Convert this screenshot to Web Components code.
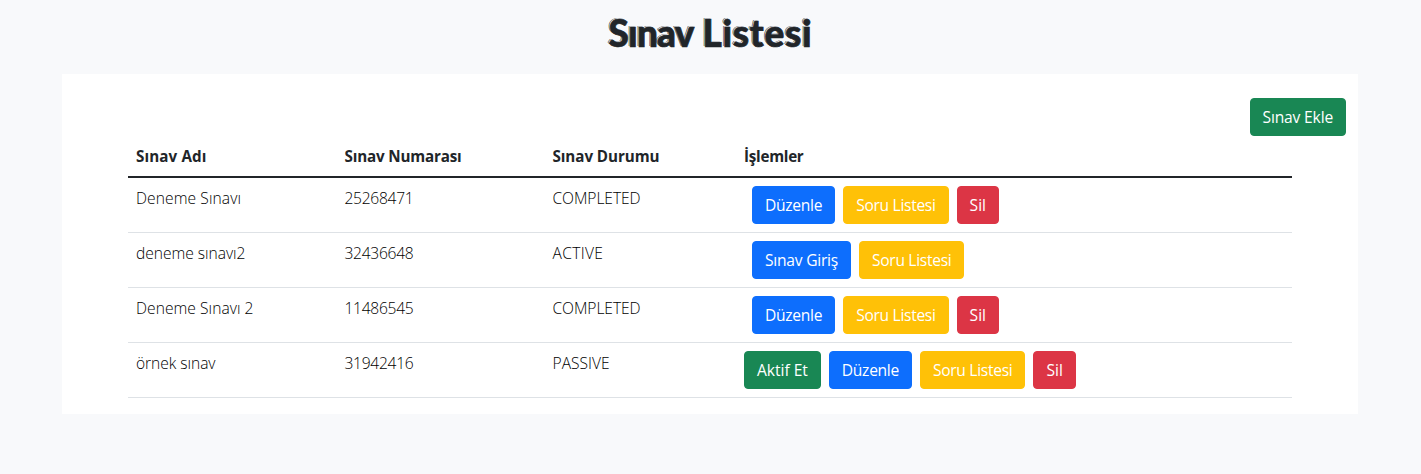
<!DOCTYPE html>
<html lang="tr">
<head>
<meta charset="utf-8">
<title>Sınav Listesi</title>
<style>
  html, body { margin: 0; height: 100%; }
  body { background: #f8f9fb; color: #212529; font: 15.6px/24px "Open Sans", "Noto Sans", sans-serif; }
</style>
</head>
<body>
<exam-page></exam-page>
<script>
// Text run set to a fixed width by evening out its tracking.
class FitText extends HTMLElement {
  connectedCallback() {
    if (!this.shadowRoot) {
      this.attachShadow({ mode: 'open' }).innerHTML =
        '<style>:host{display:inline-block;white-space:nowrap}span{display:inline-block}</style><span><slot></slot></span>';
    }
    const width = parseFloat(this.getAttribute('width'));
    const span = this.shadowRoot.querySelector('span');
    const natural = span.getBoundingClientRect().width;
    const count = [...this.textContent].length;
    span.style.letterSpacing = ((width - natural) / count) + 'px';
    this.style.width = width + 'px';
  }
}
customElements.define('fit-text', FitText);

class ActionButton extends HTMLElement {
  connectedCallback() {
    this.attachShadow({ mode: 'open' }).innerHTML = `
      <style>
        :host { display: inline-block; }
        button { display: block; box-sizing: border-box; height: 38px; margin: 0; padding: 6px 12px;
          border: 1px solid var(--tone); border-radius: 4px; background: var(--tone);
          color: #fff; font: inherit; font-weight: 400; line-height: 24px; }
        :host([kind=success]) { --tone: #198754; }
        :host([kind=primary]) { --tone: #0d6efd; }
        :host([kind=warning]) { --tone: #ffc107; }
        :host([kind=danger]) { --tone: #dc3545; }
      </style><button type="button"><slot></slot></button>`;
  }
}
customElements.define('action-button', ActionButton);

class PageTitle extends HTMLElement {
  connectedCallback() {
    this.attachShadow({ mode: 'open' }).innerHTML = `
      <style>
        :host { display: block; height: 74px; box-sizing: border-box; padding-top: 9px; }
        h1 { margin: 0; text-align: center; font: 900 37px/48px Lato, "Open Sans", sans-serif;
          -webkit-text-stroke: 0.7px #212529;
          text-shadow: -1px -1px 0 #d5d8dc, -1.5px -1px 0 #343a40; }
      </style><h1><slot></slot></h1>`;
  }
}
customElements.define('page-title', PageTitle);

class ExamTable extends HTMLElement {
  connectedCallback() {
    const cell = ([text, width]) => `<fit-text width="${width}">${text}</fit-text>`;
    const actions = {
      edit: ['primary', 'Düzenle', 57.2],
      enter: ['primary', 'Sınav Giriş', 73],
      questions: ['warning', 'Soru Listesi', 79.4],
      remove: ['danger', 'Sil', 16.5],
      activate: ['success', 'Aktif Et', 50.8]
    };
    const button = key => {
      const [kind, text, width] = actions[key];
      return `<action-button kind="${kind}">${cell([text, width])}</action-button>`;
    };
    const rows = [
      [['Deneme Sınavı', 105], ['25268471', 69], ['COMPLETED', 88], ['edit', 'questions', 'remove']],
      [['deneme sınavı2', 109.5], ['32436648', 69], ['ACTIVE', 50.8], ['enter', 'questions']],
      [['Deneme Sınavı 2', 117.5], ['11486545', 69], ['COMPLETED', 88], ['edit', 'questions', 'remove']],
      [['örnek sınav', 79.5], ['31942416', 69], ['PASSIVE', 57.2], ['activate', 'edit', 'questions', 'remove']]
    ];
    const heads = [['Sınav Adı', 70.5], ['Sınav Numarası', 117], ['Sınav Durumu', 107], ['İşlemler', 59.5]];
    this.attachShadow({ mode: 'open' }).innerHTML = `
      <style>
        :host { display: block; }
        table { width: 100%; border-collapse: separate; border-spacing: 0; table-layout: fixed; }
        th, td { padding: 8px; text-align: left; vertical-align: top; box-sizing: border-box; line-height: 24px; }
        th { height: 42px; font-size: 15.2px; font-weight: 700; border-bottom: 2px solid #212529; }
        td { height: 55px; font-weight: 300; border-bottom: 1px solid #dee2e6; color: #000; }
        .name { width: 208.5px; } .number { width: 208px; } .state { width: 191.5px; }
        fit-text { height: 24px; vertical-align: top; }
        .actions { display: flex; gap: 8px; padding-left: 8px; }
        .wide { padding-left: 0; }
      </style>
      <table>
        <colgroup><col class="name"><col class="number"><col class="state"><col></colgroup>
        <thead><tr>${heads.map(h => `<th>${cell(h)}</th>`).join('')}</tr></thead>
        <tbody>${rows.map(r => `<tr>${r.slice(0, 3).map(c => `<td>${cell(c)}</td>`).join('')}
          <td><div class="actions${r[3][0] === 'activate' ? ' wide' : ''}">${r[3].map(button).join('')}</div></td></tr>`).join('')}</tbody>
      </table>`;
  }
}
customElements.define('exam-table', ExamTable);

class ExamPage extends HTMLElement {
  connectedCallback() {
    this.attachShadow({ mode: 'open' }).innerHTML = `
      <style>
        :host { display: block; }
        main { width: 1296px; box-sizing: border-box; margin: 0 63px 0 62px; padding: 24px 12px 16px; background: #fff; }
        .toolbar { display: flex; justify-content: flex-end; }
        exam-table { margin: 0 54px; }
      </style>
      <page-title><fit-text width="85">Sınav</fit-text> <fit-text width="110">Listesi</fit-text></page-title>
      <main>
        <div class="toolbar"><action-button kind="success"><fit-text width="70.5">Sınav Ekle</fit-text></action-button></div>
        <exam-table></exam-table>
      </main>`;
  }
}
customElements.define('exam-page', ExamPage);
</script>
</body>
</html>
